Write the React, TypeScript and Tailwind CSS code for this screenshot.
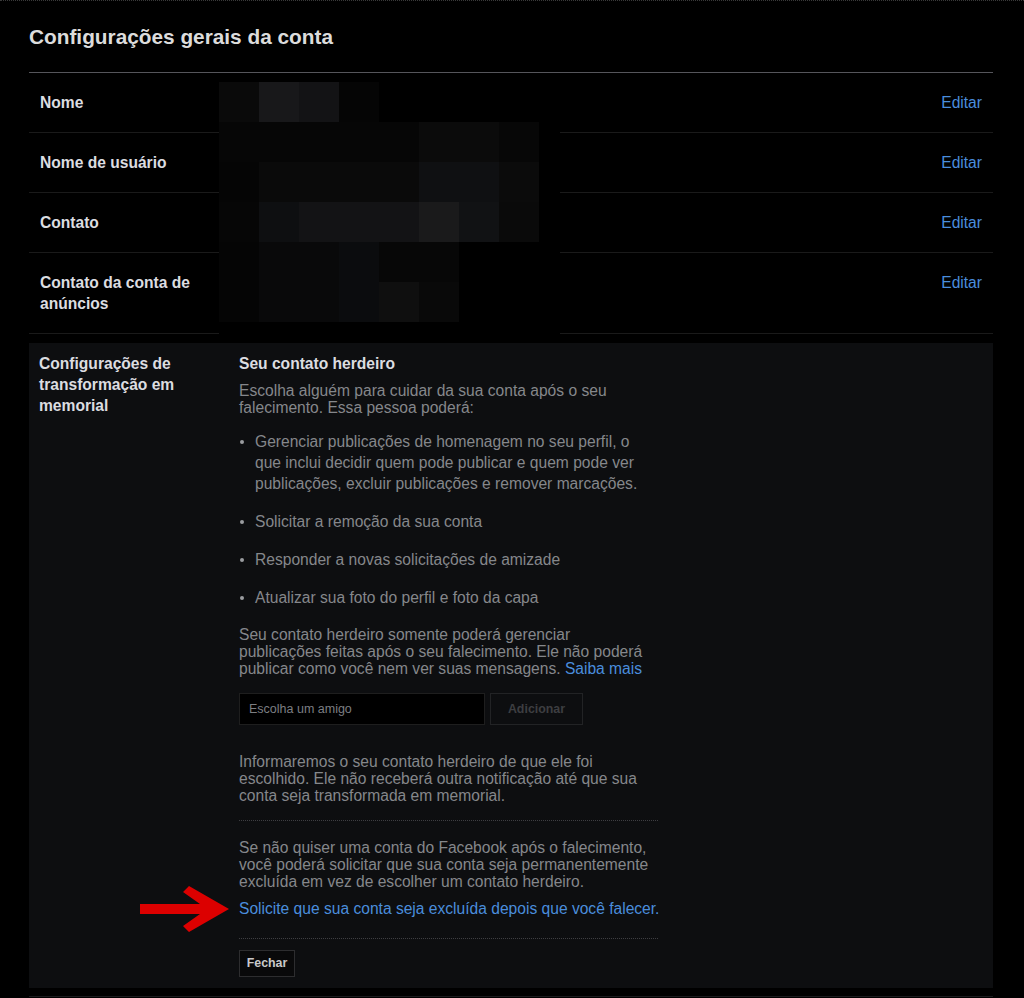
const rows = [
  { label: "Nome" },
  { label: "Nome de usuário" },
  { label: "Contato" },
  { label: "Contato da conta de anúncios" },
]

// blocos da pixelização que esconde os dados pessoais
const mask = [
  ["bg-[#0a0a0a]", "bg-[#18181a]", "bg-[#131315]", "bg-[#050505]", "bg-black", "bg-black", "bg-black", "bg-black"],
  ["bg-[#060606]", "bg-[#060606]", "bg-[#060606]", "bg-[#060606]", "bg-[#060606]", "bg-[#0b0b0b]", "bg-[#0b0b0b]", "bg-[#070707]"],
  ["bg-[#050505]", "bg-[#0a0a0a]", "bg-[#0a0a0a]", "bg-[#0a0a0a]", "bg-[#0a0a0a]", "bg-[#0f1012]", "bg-[#0f1012]", "bg-[#0b0b0b]"],
  ["bg-[#060606]", "bg-[#0e0f11]", "bg-[#131315]", "bg-[#131315]", "bg-[#131315]", "bg-[#1a1a1b]", "bg-[#111214]", "bg-[#0a0a0a]"],
  ["bg-[#050505]", "bg-[#09090a]", "bg-[#09090a]", "bg-[#0b0c0e]", "bg-[#070707]", "bg-[#070707]", "bg-black", "bg-black"],
  ["bg-[#050505]", "bg-[#09090a]", "bg-[#09090a]", "bg-[#0b0c0e]", "bg-[#0f0f0f]", "bg-[#090909]", "bg-black", "bg-black"],
]

const powers = [
  "Gerenciar publicações de homenagem no seu perfil, o que inclui decidir quem pode publicar e quem pode ver publicações, excluir publicações e remover marcações.",
  "Solicitar a remoção da sua conta",
  "Responder a novas solicitações de amizade",
  "Atualizar sua foto do perfil e foto da capa",
]

export default function App() {
  return (
    <div className="min-h-[998px] bg-black border-t border-dotted border-[#3a3a3a] font-['Liberation_Sans',Arial,sans-serif]">
      <div className="w-[964px] ml-[29px]">
        <h1 className="pt-[23px] pb-[23px] text-[20.8px] leading-[25px] font-bold text-[#dcdcdc]">
          Configurações gerais da conta
        </h1>
        <div className="h-px bg-[#55555b]" />

        <div className="relative">
          {rows.map((row) => (
            <div key={row.label} className="flex items-start justify-between border-b border-[#1a1a1a] px-[11px] py-[19px]">
              <div className="w-[174px] text-[15.6px] leading-[21px] font-bold text-[#dcdde0]">{row.label}</div>
              <a className="text-[15.6px] leading-[21px] text-[#4a8ddc]">Editar</a>
            </div>
          ))}
          <div className="absolute left-[190px] top-0 w-[341px] h-[262px] bg-black pt-[9px]">
            {mask.map((line, i) => (
              <div key={i} className="flex">
                {line.map((c, j) => (
                  <div key={j} className={`w-[40px] h-[40px] ${c}`} />
                ))}
              </div>
            ))}
          </div>
        </div>

        <section className="mt-[9px] flex bg-[#0d0e10] pl-[10px] pt-[10px] pb-[11px]">
          <div className="w-[200px] pr-[26px] text-[15.6px] leading-[21px] font-bold text-[#dcdde0]">
            Configurações de transformação em memorial
          </div>
          <div className="w-[414px] text-[15.6px] text-[#85878b]">
            <h3 className="leading-[21px] font-bold text-[#dcdde0]">Seu contato herdeiro</h3>
            <p className="mt-[8px] leading-[17px]">
              Escolha alguém para cuidar da sua conta após o seu falecimento. Essa pessoa poderá:
            </p>
            <ul className="mt-[15px] space-y-[17px]">
              {powers.map((p) => (
                <li key={p} className="flex leading-[21px]">
                  <span className="w-[16px] shrink-0 pt-[9px] pl-[1px]">
                    <span className="block w-[4px] h-[4px] rounded-full bg-[#9a9ca0]" />
                  </span>
                  <span>{p}</span>
                </li>
              ))}
            </ul>
            <p className="mt-[18px] leading-[17px]">
              Seu contato herdeiro somente poderá gerenciar publicações feitas após o seu falecimento. Ele não poderá publicar como você nem ver suas mensagens.{" "}
              <a className="text-[#4a8ddc]">Saiba mais</a>
            </p>
            <div className="mt-[16px] flex gap-[5px]">
              <input
                readOnly
                placeholder="Escolha um amigo"
                className="w-[246px] h-[32px] bg-black border border-[#1e1e1e] px-[9px] text-[12.5px] text-[#9a9ca0] placeholder:text-[#7c7e82] outline-none"
              />
              <button className="w-[93px] h-[32px] border border-[#222325] text-[12.4px] font-bold text-[#3d3e41]">
                Adicionar
              </button>
            </div>
            <p className="mt-[28px] leading-[17px]">
              Informaremos o seu contato herdeiro de que ele foi escolhido. Ele não receberá outra notificação até que sua conta seja transformada em memorial.
            </p>
            <div className="mt-[16px] w-[419px] border-t border-dotted border-[#3e3e42]" />
            <p className="mt-[18px] leading-[17px]">
              Se não quiser uma conta do Facebook após o falecimento, você poderá solicitar que sua conta seja permanentemente excluída em vez de escolher um contato herdeiro.
            </p>
            <div className="relative mt-[10px] leading-[17px] whitespace-nowrap">
              <svg className="absolute left-[-99px] top-[-15px]" width="90" height="48" viewBox="0 0 90 48">
                <polygon points="0,19 60,19 43,7 49,1 89,24 49,47 43,41 60,29 0,29" fill="#dc0000" />
              </svg>
              <a className="text-[#4a8ddc]">Solicite que sua conta seja excluída depois que você falecer.</a>
            </div>
            <div className="mt-[21px] w-[419px] border-t border-dotted border-[#3e3e42]" />
            <button className="mt-[11px] w-[56px] h-[27px] border border-[#2d2d2f] bg-[#09090a] text-[12.4px] font-bold text-[#c9c9cb]">
              Fechar
            </button>
          </div>
        </section>
        <div className="mt-[8px] h-px bg-[#1c1c1e]" />
      </div>
    </div>
  )
}
